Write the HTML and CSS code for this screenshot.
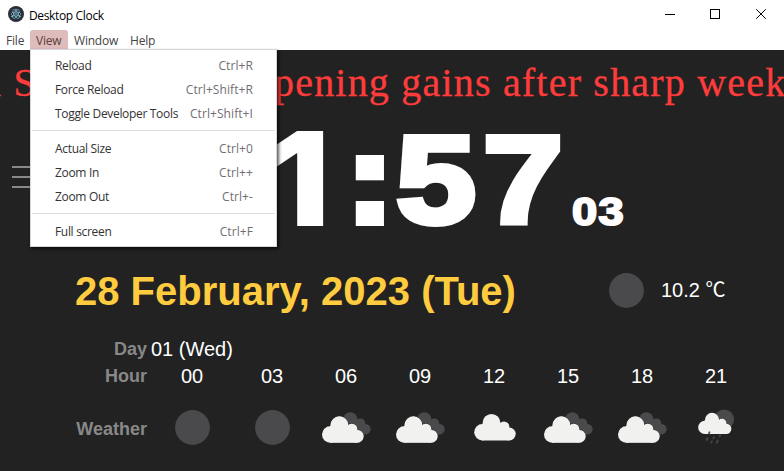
FILE: index.html
```html
<!DOCTYPE html>
<html lang="en">
<head>
<meta charset="utf-8">
<title>Desktop Clock</title>
<link rel="stylesheet" href="styles.css">
</head>
<body>
<svg class="defs" width="0" height="0">
  <defs>
    <g id="cloud-shape">
      <circle cx="19.3" cy="36.5" r="8.2"/><circle cx="28.4" cy="27.2" r="8.9"/><circle cx="40.8" cy="31.2" r="5.5"/><circle cx="46.2" cy="38.3" r="6.4"/>
      <path d="M19 28H37L46 34V44.7H19Z"/>
    </g>
    <symbol id="moon" viewBox="0 0 70 60"><circle cx="35.5" cy="29.5" r="17.4" fill="#4a4a4c"/></symbol>
    <symbol id="cloud" viewBox="0 0 70 60"><use href="#cloud-shape" x="4.1" y="-2.3" fill="#f1f1f0"/></symbol>
    <symbol id="clouds" viewBox="0 0 70 60">
      <g fill="#4a4a4c"><circle cx="39.3" cy="21.3" r="7"/><circle cx="49.3" cy="25.3" r="4.9"/><circle cx="54.4" cy="31.3" r="5.3"/><path d="M34 24H46L54 29V36.6H34Z"/></g>
      <use href="#cloud-shape" fill="#f1f1f0" stroke="#222" stroke-width=".7"/>
      <use href="#cloud-shape" fill="#f1f1f0"/>
    </symbol>
    <symbol id="rain" viewBox="0 0 70 60">
      <circle cx="43.2" cy="21.5" r="9.9" fill="#4a4a4c"/>
      <use href="#cloud-shape" transform="translate(8.3 .2) scale(.8)" fill="#f1f1f0"/>
      <path d="M28.5 34.2l-.6 1.4M26.6 40l-1 2M30.9 43.3l-.6 1.3M32.9 39.2l-.5 1.1M36.7 42.7l-.9 2M39.2 37.2l-.6 1.1" stroke="#4a4a4c" stroke-width="1.7" stroke-linecap="round"/>
    </symbol>
  </defs>
</svg>
<div class="window">
  <header class="titlebar">
    <svg class="app-icon" viewBox="0 0 16 16"><circle cx="8" cy="8" r="8" fill="#2b2e3b"/><g fill="none" stroke="#9feaf9" stroke-opacity=".75" stroke-width=".65"><ellipse cx="8" cy="8" rx="5" ry="2"/><ellipse cx="8" cy="8" rx="5" ry="2" transform="rotate(60 8 8)"/><ellipse cx="8" cy="8" rx="5" ry="2" transform="rotate(120 8 8)"/></g><g fill="#9feaf9"><circle cx="8" cy="8" r=".7"/><circle cx="12" cy="10.5" r=".65"/><circle cx="4" cy="10.5" r=".65"/><circle cx="8" cy="3.3" r=".6"/></g></svg>
    <span class="title">Desktop Clock</span>
    <div class="controls">
      <svg viewBox="0 0 10 10" shape-rendering="crispEdges"><path d="M0 5.5H10"/></svg>
      <svg viewBox="0 0 10 10" shape-rendering="crispEdges"><path d="M.5 .5H9.5V9.5H.5Z"/></svg>
      <svg viewBox="0 0 10 10"><path d="M.2 .2L9.8 9.8M9.8 .2L.2 9.8"/></svg>
    </div>
  </header>
  <nav class="menubar">
    <span class="tab file">File</span>
    <div class="tab view">View
      <div class="menu">
        <div class="item"><span>Reload</span><kbd>Ctrl+R</kbd></div>
        <div class="item"><span>Force Reload</span><kbd>Ctrl+Shift+R</kbd></div>
        <div class="item"><span>Toggle Developer Tools</span><kbd>Ctrl+Shift+I</kbd></div>
        <hr>
        <div class="item"><span>Actual Size</span><kbd>Ctrl+0</kbd></div>
        <div class="item"><span>Zoom In</span><kbd>Ctrl++</kbd></div>
        <div class="item"><span>Zoom Out</span><kbd>Ctrl+-</kbd></div>
        <hr>
        <div class="item"><span>Full screen</span><kbd>Ctrl+F</kbd></div>
      </div>
    </div>
    <span class="tab win">Window</span>
    <span class="tab help">Help</span>
  </nav>
  <main class="app">
    <div class="ticker"><span class="lead">n S</span><span>pening gains after sharp weekly</span></div>
    <div class="clock-row">
      <div class="burger"><i></i><i></i><i></i></div>
      <div class="time"><span class="d one">1</span><span class="d colon">:</span><span class="d five">5</span><span class="d seven">7</span></div>
      <div class="seconds">03</div>
    </div>
    <div class="date-row">
      <div class="date">28 February, 2023 (Tue)</div>
      <svg class="wx"><use href="#moon"/></svg>
      <div class="temp">10.2 <span class="unit">℃</span></div>
    </div>
    <div class="forecast">
      <b>Day</b><span class="day">01 (Wed)</span>
      <b>Hour</b><span>00</span><span>03</span><span>06</span><span>09</span><span>12</span><span>15</span><span>18</span><span>21</span>
      <b class="low">Weather</b>
      <svg class="wx"><use href="#moon"/></svg><svg class="wx"><use href="#moon"/></svg><svg class="wx"><use href="#clouds"/></svg><svg class="wx"><use href="#clouds"/></svg><svg class="wx"><use href="#cloud"/></svg><svg class="wx"><use href="#clouds"/></svg><svg class="wx"><use href="#clouds"/></svg><svg class="wx"><use href="#rain"/></svg>
    </div>
  </main>
</div>
</body>
</html>
```

FILE: styles.css
```css
* { box-sizing: border-box; }
body { margin: 0; background: #222; overflow: hidden; font-family: "Liberation Sans", sans-serif; }
.defs { position: absolute; }
.window { width: 784px; height: 471px; display: flex; flex-direction: column; overflow: hidden; }
.titlebar { height: 30px; background: #fff; display: flex; align-items: center; padding: 0 18px 2px 8px; font: 12px "Open Sans", sans-serif; color: #000; }
.app-icon { width: 16px; height: 16px; margin-right: 5px; }
.title { letter-spacing: -.35px; padding-top: 2px; }
.controls { margin-left: auto; display: flex; gap: 35px; }
.controls svg { width: 10px; height: 10px; fill: none; stroke: #000; stroke-width: 1; }
.controls svg:last-child { margin-left: 1px; }
.menubar { height: 20px; background: #fff; display: flex; font: 12px/20px "Open Sans", sans-serif; color: #444; letter-spacing: -.2px; }
.tab { height: 20px; line-height: 22px; }
.file { width: 30px; padding-left: 6px; }
.view { width: 38px; padding-left: 6px; background: #dfbcbc; border-radius: 3px 3px 0 0; color: #5b3c40; position: relative; }
.win { padding-left: 6px; width: 62px; }
.help { padding-left: 0; }
.menu { position: absolute; z-index: 2; left: 0; top: 19px; width: 247px; height: 198px; background: #fff; border: 1px solid #d5d7dc; padding: 4px 1px; box-shadow: 2px 2px 3px rgba(0,0,0,.65); color: #333; letter-spacing: -.32px; }
.item { height: 24px; line-height: 24px; padding: 0 22px 0 23px; display: flex; justify-content: space-between; white-space: nowrap; }
.item kbd { font: inherit; color: #706e72; letter-spacing: .08px; }
.menu hr { border: 0; height: 1px; background: #dadce0; margin: 4px 0 6px; }
.app { flex: 1; background: #222; color: #fff; }
.ticker { height: 66px; display: flex; font: 40px/66px "Liberation Serif", serif; letter-spacing: 1.2px; color: #ff3c3c; white-space: nowrap; -webkit-text-stroke: .3px #ff3c3c; }
.lead { flex: none; width: 293px; margin-left: -19px; }
.clock-row { height: 134px; display: flex; }
.burger { width: 32px; padding: 50px 0 0 12px; display: flex; flex-direction: column; gap: 8px; }
.burger i { height: 2px; background: #888; }
.time { display: flex; align-items: baseline; margin-left: 219px; height: 134px; font: bold 125px/126px "Liberation Sans", sans-serif; }
.d { flex: none; display: block; text-align: center; -webkit-text-stroke: 6px #fff; transform: translateY(-3px) scaleX(1.15); }
.one { width: 97px; font: 900 131px/126px Inter, sans-serif; -webkit-text-stroke: 0; transform: none; }
.colon { width: 44px; -webkit-text-stroke-width: 8px; transform: translateY(-4px) scaleX(1.1); }
.five { width: 88px; }
.seven { width: 86px; }
.seconds { font: bold 39px/60px "Liberation Sans", sans-serif; padding-top: 66px; margin-left: 6px; letter-spacing: 1.2px; -webkit-text-stroke: 2px #fff; transform: scaleX(1.16); transform-origin: 0 0; }
.date-row { height: 81px; display: flex; align-items: center; padding-left: 75px; }
.date { width: 516px; font: bold 40px/46px "Liberation Sans", sans-serif; color: #ffcc40; white-space: nowrap; }
.wx { width: 70px; height: 60px; }
.temp { font-size: 20px; white-space: nowrap; }
.unit { font-family: "Noto Sans CJK JP", sans-serif; line-height: 20px; }
.forecast { display: grid; grid-template-columns: 72px 82px repeat(7, 70px); grid-template-rows: 25px 25px 74px; column-gap: 4px; row-gap: 2px; margin-left: 75px; padding-top: 6px; align-items: center; text-align: center; font-size: 20px; white-space: nowrap; }
.forecast b { font-size: 18px; color: #888; text-align: right; }
.forecast .low { padding-top: 2px; }
.forecast .day { grid-column: 2 / -1; text-align: left; }
.forecast .wx { justify-self: center; }
```
